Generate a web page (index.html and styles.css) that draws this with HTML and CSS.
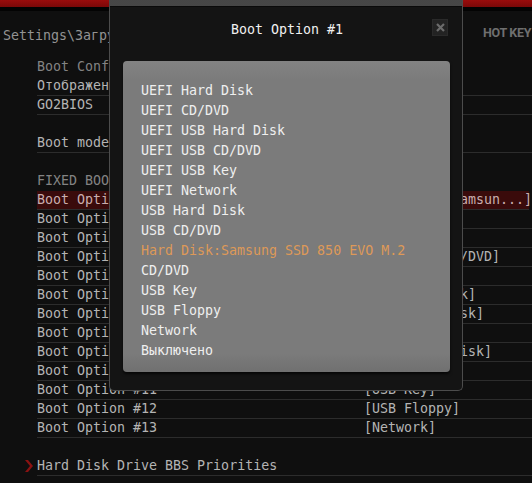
FILE: index.html
```html
<!DOCTYPE html>
<html lang="ru">
<head>
<meta charset="utf-8">
<title>Boot Option #1</title>
<link rel="stylesheet" href="styles.css">
</head>
<body>
<div class="screen">
  <div class="topbar"></div>
  <div class="topline"></div>
  <div class="header">
    <div class="path">Settings\Загрузка</div>
    <div class="hotkey">HOT KEY</div>
  </div>
  <div class="list">
    <div class="row head">Boot Configuration</div>
    <div class="row line">Отображение логотипа</div>
    <div class="row line">GO2BIOS</div>
    <div class="row"></div>
    <div class="row line">Boot mode select</div>
    <div class="row"></div>
    <div class="row head">FIXED BOOT ORDER Priorities</div>
    <div class="row line sel"><span class="label">Boot Option #1</span><span class="value">[Hard Disk:Samsun...]</span></div>
    <div class="row line"><span class="label">Boot Option #2</span><span class="value">[CD/DVD]</span></div>
    <div class="row line"><span class="label">Boot Option #3</span><span class="value">[USB CD/DVD]</span></div>
    <div class="row line"><span class="label">Boot Option #4</span><span class="value">[UEFI USB CD/DVD]</span></div>
    <div class="row line"><span class="label">Boot Option #5</span><span class="value">[Выключено]</span></div>
    <div class="row line"><span class="label">Boot Option #6</span><span class="value">[UEFI Network]</span></div>
    <div class="row line"><span class="label">Boot Option #7</span><span class="value">[USB Hard Disk]</span></div>
    <div class="row line"><span class="label">Boot Option #8</span><span class="value">[Выключено]</span></div>
    <div class="row line"><span class="label">Boot Option #9</span><span class="value">[UEFI Hard Disk]</span></div>
    <div class="row line"><span class="label">Boot Option #10</span><span class="value">[Выключено]</span></div>
    <div class="row line"><span class="label">Boot Option #11</span><span class="value">[USB Key]</span></div>
    <div class="row line"><span class="label">Boot Option #12</span><span class="value">[USB Floppy]</span></div>
    <div class="row line"><span class="label">Boot Option #13</span><span class="value">[Network]</span></div>
    <div class="row"></div>
    <div class="row line sub">
      <svg class="chev" width="8" height="12" viewBox="0 0 8 12"><path d="M0 0 L3 0 L8 6 L3 12 L0 12 L5 6 Z" fill="#8a1212"/></svg>
      <span class="label">Hard Disk Drive BBS Priorities</span>
    </div>
  </div>

  <div class="dialog">
    <div class="dots"></div>
    <div class="title">Boot Option #1</div>
    <div class="close">
      <svg width="11" height="11" viewBox="0 0 11 11"><path d="M2 2 L9 9 M9 2 L2 9" stroke="#6c6c6c" stroke-width="2.2"/></svg>
    </div>
    <div class="panel">
      <div class="item">UEFI Hard Disk</div>
      <div class="item">UEFI CD/DVD</div>
      <div class="item">UEFI USB Hard Disk</div>
      <div class="item">UEFI USB CD/DVD</div>
      <div class="item">UEFI USB Key</div>
      <div class="item">UEFI Network</div>
      <div class="item">USB Hard Disk</div>
      <div class="item">USB CD/DVD</div>
      <div class="item active">Hard Disk:Samsung SSD 850 EVO M.2</div>
      <div class="item">CD/DVD</div>
      <div class="item">USB Key</div>
      <div class="item">USB Floppy</div>
      <div class="item">Network</div>
      <div class="item">Выключено</div>
    </div>
  </div>
</div>
</body>
</html>
```

FILE: styles.css
```css
* { box-sizing: border-box; }
html, body {
  margin: 0;
  padding: 0;
  background: #0e0e0e;
}
.screen {
  position: relative;
  width: 532px;
  height: 483px;
  overflow: hidden;
  background: #0f0f0f;
  font-family: "DejaVu Sans Mono", "Liberation Mono", monospace;
  font-size: 13.3px;
  color: #b4b4b4;
}
.topbar {
  height: 7px;
  background: linear-gradient(#9a0c0c, #7a0808);
}
.topline {
  height: 4px;
  background: #030303;
}
.header {
  height: 47px;
  display: flex;
  justify-content: space-between;
  padding: 16px 0 0 3px;
}
.path {
  line-height: 18px;
  height: 18px;
  color: #939393;
  white-space: nowrap;
}
.hotkey {
  font-family: "Roboto", "Liberation Sans", sans-serif;
  font-weight: bold;
  font-size: 12.5px;
  color: #6f6f6f;
  line-height: 18px;
  margin-top: -3px;
  width: 49px;
  white-space: nowrap;
  letter-spacing: -0.3px;
}
.list {
  display: flex;
  flex-direction: column;
}
.row {
  height: 19px;
  line-height: 18px;
  margin-left: 37px;
  white-space: nowrap;
  display: flex;
  position: relative;
}
.row.line {
  border-bottom: 1px solid #2c2c2c;
}
.row.head {
  color: #838383;
}
.row .label {
  width: 327px;
  flex: none;
}
.row .value {
  flex: none;
}
.row.sel {
  background: #3a0b0b;
  margin-right: 3px;
  color: #c9aeae;
}
.row.sub .chev {
  position: absolute;
  left: -12px;
  top: 3px;
}
.dialog {
  position: absolute;
  left: 109px;
  top: 0;
  width: 354px;
  height: 391px;
  background: #141414;
  border: 1px solid #4c4c4c;
  border-top: none;
  border-radius: 0 0 5px 5px;
  display: flex;
  flex-direction: column;
}
.dots {
  height: 7px;
  background-color: #1c1c1c;
  background-image: radial-gradient(circle, #4a4a4a 0.7px, transparent 0.8px);
  background-size: 2px 2px;
  border-bottom: 1px solid #0a0a0a;
}
.title {
  height: 54px;
  padding-top: 14px;
  line-height: 18px;
  text-align: center;
  color: #f0f0f0;
  padding-left: 2px;
}
.close {
  position: absolute;
  left: 322px;
  top: 19px;
  width: 16px;
  height: 17px;
  background: #232323;
  border: 1px solid #2a2a2a;
  display: flex;
  align-items: center;
  justify-content: center;
}
.panel {
  margin-left: 13px;
  width: 327px;
  height: 311px;
  background: linear-gradient(#838383, #7b7b7b 6%, #7b7b7b 94%, #707070);
  border-radius: 4px;
  box-shadow: 0 2px 3px rgba(0, 0, 0, 0.7);
  padding: 20px 0 0 18px;
}
.item {
  height: 20px;
  line-height: 20px;
  color: #efefef;
  white-space: nowrap;
}
.item.active {
  color: #de9958;
}
```
